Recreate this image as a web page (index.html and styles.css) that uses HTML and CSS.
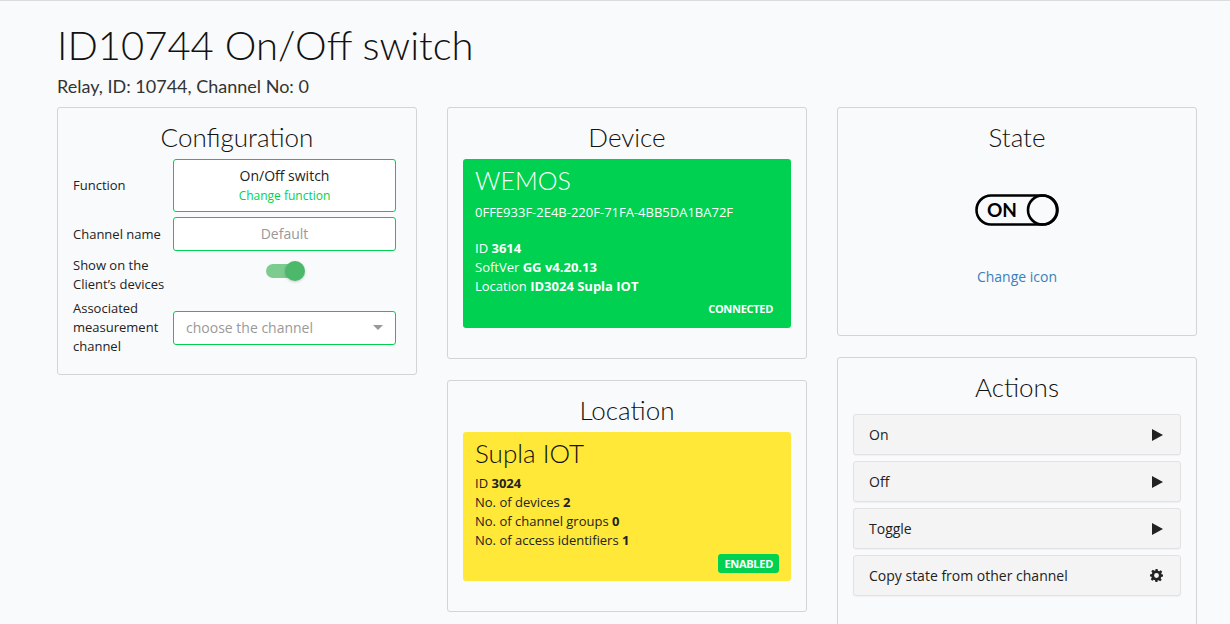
FILE: index.html
```html
<!DOCTYPE html>
<html lang="en">
<head>
<meta charset="utf-8">
<title>ID10744 On/Off switch</title>
<link rel="stylesheet" href="styles.css">
</head>
<body>
<div class="topline"></div>
<div class="page">
  <header class="page-head">
    <h1 class="page-title">ID10744 On/Off switch</h1>
    <div class="page-sub">Relay, ID: 10744, Channel No: 0</div>
  </header>
  <div class="columns">
    <div class="col">
      <section class="card">
        <h2 class="card-title">Configuration</h2>
        <div class="config">
          <div class="cfg-label">Function</div>
          <div class="fn-box">
            <div class="fn-name">On/Off switch</div>
            <div class="fn-change">Change function</div>
          </div>
          <div class="cfg-label">Channel name</div>
          <div class="text-input">Default</div>
          <div class="cfg-label">Show on the Client’s devices</div>
          <div class="switch-wrap"><span class="switch"><span class="switch-knob"></span></span></div>
          <div class="cfg-label">Associated measurement channel</div>
          <div class="select-input"><span>choose the channel</span><span class="caret"></span></div>
        </div>
      </section>
    </div>
    <div class="col">
      <section class="card card-pad">
        <h2 class="card-title">Device</h2>
        <div class="tile tile-green">
          <h3 class="tile-title">WEMOS</h3>
          <div class="tile-guid">0FFE933F-2E4B-220F-71FA-4BB5DA1BA72F</div>
          <div class="tile-line">ID <b>3614</b></div>
          <div class="tile-line">SoftVer <b>GG v4.20.13</b></div>
          <div class="tile-line">Location <b>ID3024 Supla IOT</b></div>
          <div class="tile-foot"><span class="status">CONNECTED</span></div>
        </div>
      </section>
      <section class="card card-pad">
        <h2 class="card-title">Location</h2>
        <div class="tile tile-yellow">
          <h3 class="tile-title">Supla IOT</h3>
          <div class="tile-line first">ID <b>3024</b></div>
          <div class="tile-line">No. of devices <b>2</b></div>
          <div class="tile-line">No. of channel groups <b>0</b></div>
          <div class="tile-line">No. of access identifiers <b>1</b></div>
          <div class="tile-foot"><span class="badge">ENABLED</span></div>
        </div>
      </section>
    </div>
    <div class="col">
      <section class="card state-card">
        <h2 class="card-title">State</h2>
        <div class="state-icon">
          <svg width="84" height="32" viewBox="0 0 84 32" aria-hidden="true">
            <rect x="1.5" y="1.5" width="81" height="29" rx="14.5" ry="14.5" fill="none" stroke="#000" stroke-width="2.6"/>
            <circle cx="67.5" cy="16" r="14.5" fill="none" stroke="#000" stroke-width="2.6"/>
          </svg>
          <span class="state-text">ON</span>
        </div>
        <a class="link" href="#">Change icon</a>
      </section>
      <section class="card card-pad">
        <h2 class="card-title">Actions</h2>
        <div class="actions">
          <button class="action">On<svg class="play" width="11" height="12" viewBox="0 0 11 12"><path d="M0 0 L11 6 L0 12 Z" fill="#222"/></svg></button>
          <button class="action">Off<svg class="play" width="11" height="12" viewBox="0 0 11 12"><path d="M0 0 L11 6 L0 12 Z" fill="#222"/></svg></button>
          <button class="action">Toggle<svg class="play" width="11" height="12" viewBox="0 0 11 12"><path d="M0 0 L11 6 L0 12 Z" fill="#222"/></svg></button>
          <button class="action">Copy state from other channel<svg class="gear" width="13" height="13" viewBox="0 0 24 24"><path fill="#222" fill-rule="evenodd" d="M10 0h4l.7 3.3 2.3 1 2.8-1.9 2.8 2.8-1.9 2.8 1 2.3L24 10v4l-3.3.7-1 2.3 1.9 2.8-2.8 2.8-2.8-1.9-2.3 1L14 24h-4l-.7-3.3-2.3-1-2.8 1.9-2.8-2.8 1.9-2.8-1-2.3L0 14v-4l3.3-.7 1-2.3-1.9-2.8 2.8-2.8 2.8 1.9 2.3-1zM12 7.5a4.5 4.5 0 1 0 0 9 4.5 4.5 0 1 0 0-9z"/></svg></button>
        </div>
      </section>
    </div>
  </div>
</div>
</body>
</html>
```
FILE: styles.css
```css
html, body {
  margin: 0;
  padding: 0;
  background: #f9fafb;
  color: #222;
  font-family: "Open Sans", "Liberation Sans", sans-serif;
  font-size: 13px;
}
.topline {
  height: 1px;
  background: #dcdcdc;
}
.page {
  padding: 0 0 0 57px;
}
.page-head {
  padding-top: 20px;
  height: 106px;
  box-sizing: border-box;
}
.page-title {
  margin: 0;
  font-family: "Lato", sans-serif;
  font-weight: 300;
  font-size: 40px;
  line-height: 48px;
  color: #111;
}
.page-sub {
  font-family: "Lato", sans-serif;
  font-weight: 400;
  font-size: 18px;
  line-height: 22px;
  color: #333;
  margin-top: 6px;
}
.columns {
  display: grid;
  grid-template-columns: 360px 360px 360px;
  column-gap: 30px;
  align-items: start;
}
.col {
  display: flex;
  flex-direction: column;
  gap: 21px;
}
.card {
  border: 1px solid #d4d4d4;
  border-radius: 3px;
  background: #f9fafb;
}
.card-pad {
  padding: 0 15px 30px;
}
.card-title {
  margin: 0;
  padding-top: 14px;
  height: 51px;
  box-sizing: border-box;
  text-align: center;
  font-family: "Lato", sans-serif;
  font-weight: 300;
  font-size: 26px;
  line-height: 30px;
  color: #111;
}
.config {
  display: grid;
  grid-template-columns: 100px 223px;
  row-gap: 5px;
  align-items: center;
  padding: 0 20px 18px 15px;
}
.cfg-label {
  line-height: 19px;
  padding-right: 8px;
}
.fn-box {
  height: 53px;
  box-sizing: border-box;
  border: 1px solid #00d151;
  border-radius: 3px;
  background: #fff;
  text-align: center;
  padding-top: 7px;
}
.fn-name {
  font-size: 14px;
  line-height: 18px;
  color: #222;
}
.fn-change {
  font-size: 12px;
  line-height: 18px;
  color: #00d151;
  margin-top: 2px;
}
.text-input {
  height: 34px;
  box-sizing: border-box;
  border: 1px solid #00d151;
  border-radius: 3px;
  background: #fff;
  text-align: center;
  color: #999;
  font-size: 14px;
  line-height: 32px;
}
.switch-wrap {
  display: flex;
  justify-content: center;
  padding-bottom: 8px;
}
.switch {
  position: relative;
  width: 34px;
  height: 14px;
  border-radius: 7px;
  background: #7ccc8f;
  margin-right: 4px;
}
.switch-knob {
  position: absolute;
  right: -5px;
  top: -3px;
  width: 20px;
  height: 20px;
  border-radius: 50%;
  background: #4cb86a;
  box-shadow: 0 1px 3px rgba(0,0,0,.2);
}
.select-input {
  height: 34px;
  box-sizing: border-box;
  border: 1px solid #00d151;
  border-radius: 3px;
  background: #fff;
  color: #999;
  font-size: 14px;
  line-height: 32px;
  padding: 0 12px;
  display: flex;
  justify-content: space-between;
  align-items: center;
}
.caret {
  width: 0;
  height: 0;
  border-left: 5px solid transparent;
  border-right: 5px solid transparent;
  border-top: 5px solid #999;
}
.tile {
  border-radius: 3px;
  padding: 6px 12px 8px;
}
.tile-green {
  background: #00d151;
  color: #fff;
  padding-bottom: 11px;
}
.tile-yellow {
  background: #ffe838;
  color: #222;
}
.tile-title {
  margin: 0;
  font-family: "Lato", sans-serif;
  font-weight: 300;
  font-size: 25px;
  line-height: 30px;
}
.tile-yellow .tile-title {
  font-size: 26px;
  color: #111;
}
.tile-guid {
  margin-top: 8px;
  margin-bottom: 17px;
  line-height: 19px;
}
.tile-line {
  line-height: 19px;
}
.tile-line.first {
  margin-top: 6px;
}
.tile-foot {
  display: flex;
  justify-content: flex-end;
  margin-top: 5px;
}
.status {
  font-size: 11px;
  font-weight: 700;
  line-height: 16px;
  letter-spacing: -0.3px;
  padding-right: 6px;
}
.badge {
  background: #00d151;
  color: #fff;
  font-size: 11px;
  font-weight: 700;
  line-height: 19px;
  height: 19px;
  letter-spacing: -0.3px;
  padding: 0 6px;
  border-radius: 3px;
}
.tile-yellow .tile-foot {
  margin-top: 4px;
}
.state-card {
  height: 229px;
  box-sizing: border-box;
  display: flex;
  flex-direction: column;
  align-items: center;
}
.state-card .card-title {
  align-self: stretch;
}
.state-icon {
  position: relative;
  width: 84px;
  height: 32px;
  margin-top: 35px;
}
.state-text {
  position: absolute;
  left: 12px;
  top: 0;
  font-family: "Lato", sans-serif;
  font-weight: 700;
  font-size: 19px;
  line-height: 32px;
  color: #000;
}
.link {
  margin-top: 41px;
  color: #3a7fbf;
  font-size: 14px;
  text-decoration: none;
}
.actions {
  display: flex;
  flex-direction: column;
  gap: 6px;
  margin-top: 5px;
}
.action {
  display: flex;
  justify-content: space-between;
  align-items: center;
  height: 41px;
  padding: 0 17px 0 15px;
  border: 1px solid #e2e2e2;
  border-radius: 3px;
  background: #f4f4f4;
  box-shadow: 0 1px 1px rgba(0,0,0,.04);
  font-family: "Open Sans", "Liberation Sans", sans-serif;
  font-size: 14px;
  color: #222;
  text-align: left;
  cursor: pointer;
}
```
